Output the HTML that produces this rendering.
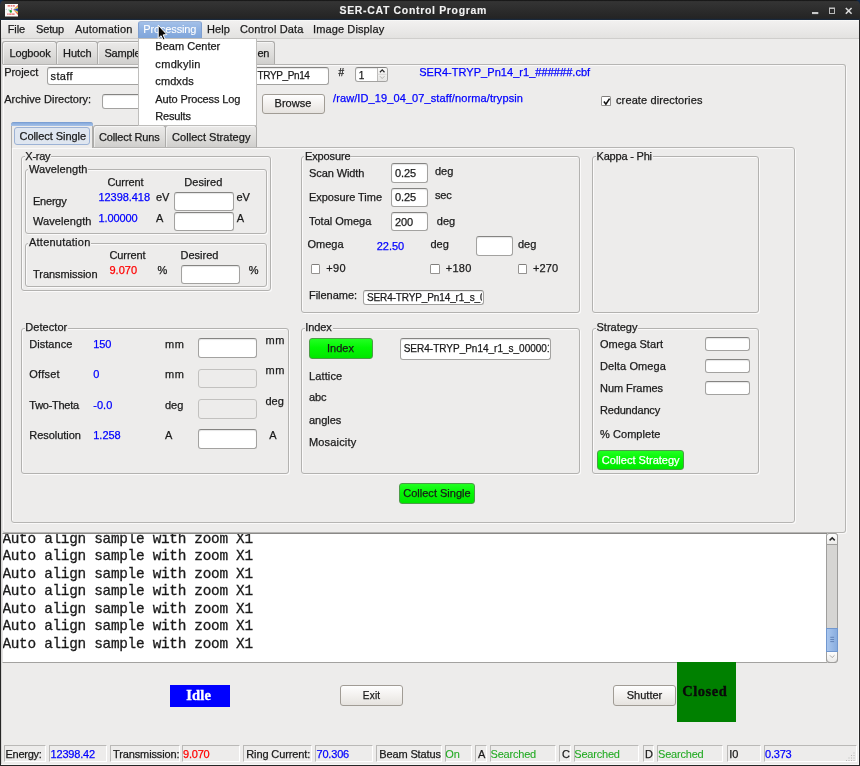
<!DOCTYPE html><html><head><meta charset="utf-8"><title>SER-CAT Control Program</title><style>
html,body{margin:0;padding:0;}
body{width:860px;height:766px;position:relative;overflow:hidden;background:#edeceb;font-family:"Liberation Sans",sans-serif;}
#w{position:absolute;left:0;top:0;width:860px;height:766px;will-change:transform;}
#w>div,#w>svg{position:absolute;}
.t{position:absolute;white-space:nowrap;display:block;-webkit-text-stroke:0.25px;}
</style></head><body><div id="w">
<div style="left:0px;top:0px;width:860px;height:19.7px;background:linear-gradient(#0d0d0d 0,#343434 1.6px,#2d2d2d 9px,#242424 18.3px,#1a2636 19.1px,#1a2a3e 19.7px);"></div>
<svg style="position:absolute;left:0;top:0" width="860" height="6"><path d="M0 0 H4.5 Q0.6 0.6 0 4.5 Z" fill="#10284a"/><path d="M860 0 H855.5 Q859.4 0.6 860 4.5 Z" fill="#10284a"/></svg>
<div style="left:0px;top:19.7px;width:1px;height:746.3px;background:#262626;"></div>
<div style="left:1px;top:19.7px;width:1px;height:745.3px;background:#d6d5d4;"></div>
<div style="left:859px;top:19.7px;width:1px;height:746.3px;background:#262626;"></div>
<div style="left:858px;top:19.7px;width:1px;height:745.3px;background:#f7f7f6;"></div>
<div style="left:1px;top:764px;width:858px;height:1px;background:#f7f7f6;"></div>
<div style="left:0px;top:765px;width:860px;height:1px;background:#262626;"></div>
<svg style="position:absolute;left:5px;top:4.4px" width="13" height="12.5" viewBox="0 0 13 12.5">
<rect width="13" height="12.5" fill="#fbfaf8"/>
<g>
<path d="M8.3 5.8 L13 0.9 L13 2.2 Z" fill="#e8452a"/><path d="M8.3 5.8 L13 2.2 L13 3.0 Z" fill="#f09020"/><path d="M8.3 5.8 L13 3.0 L13 3.7 Z" fill="#e8d820"/><path d="M8.3 5.8 L13 3.7 L13 4.5 Z" fill="#30a838"/>
<path d="M8.3 5.8 L13 4.5 L13 7.3 Z" fill="#2a38b8"/>
<path d="M8.3 5.8 L13 7.3 L13 8.1 Z" fill="#30a838"/><path d="M8.3 5.8 L13 8.1 L13 8.8 Z" fill="#e8d820"/><path d="M8.3 5.8 L13 8.8 L13 9.6 Z" fill="#f09020"/><path d="M8.3 5.8 L13 9.6 L13 10.9 Z" fill="#e8452a"/>
</g>
<path d="M2.6 1.9 H5 M5.6 1.9 H7.3 M7.9 1.9 H9.8" stroke="#e23a3a" stroke-width="1.1" opacity="0.85"/>
<path d="M2.2 10.1 H3.6 M4.2 10.1 H6.6 M7.1 10.1 H9.6" stroke="#e23a3a" stroke-width="1.1" opacity="0.8"/>
<path d="M3.4 5.6 L5.4 6.8" stroke="#86cf92" stroke-width="1.1"/>
<ellipse cx="5.8" cy="7.4" rx="1.15" ry="1.3" fill="#1f9e2e"/>
<circle cx="6.6" cy="4.9" r="0.55" fill="#a8485c"/>
<circle cx="1.2" cy="5.2" r="0.55" fill="#8ea4dc"/>
</svg>
<svg style="position:absolute;left:808px;top:4px" width="50" height="14" viewBox="0 0 50 14">
<rect x="4" y="8" width="6.3" height="2.1" fill="#c9c9c9"/>
<rect x="21.5" y="4.3" width="5" height="5.2" fill="none" stroke="#b9b9b9" stroke-width="1"/><rect x="21" y="3.6" width="6" height="1.3" fill="#c4c4c4"/>
<path d="M37.8 4 L43.6 9.7 M43.6 4 L37.8 9.7" stroke="#dadada" stroke-width="1.6"/>
</svg>
<div style="left:1px;top:19.7px;width:858px;height:19.3px;background:linear-gradient(#fbfbfa 0,#f1f0ef 1.5px,#ebeae9 50%,#e3e2e0);border-bottom:1px solid #cfcecc;box-sizing:border-box;"></div>
<div style="left:2px;top:41px;width:55px;height:24px;background:linear-gradient(#ebeae9,#dddcda 55%,#cecdcb);border:1px solid #acaba9;border-bottom:none;border-radius:3px 3px 0 0;box-sizing:border-box;box-shadow:inset 1px 1px 0 rgba(255,255,255,.55);"></div>
<div style="left:56px;top:41px;width:42px;height:24px;background:linear-gradient(#ebeae9,#dddcda 55%,#cecdcb);border:1px solid #acaba9;border-bottom:none;border-radius:3px 3px 0 0;box-sizing:border-box;box-shadow:inset 1px 1px 0 rgba(255,255,255,.55);"></div>
<div style="left:97px;top:41px;width:103px;height:24px;background:linear-gradient(#ebeae9,#dddcda 55%,#cecdcb);border:1px solid #acaba9;border-bottom:none;border-radius:3px 3px 0 0;box-sizing:border-box;box-shadow:inset 1px 1px 0 rgba(255,255,255,.55);"></div>
<div style="left:199px;top:41px;width:76px;height:24px;background:linear-gradient(#ebeae9,#dddcda 55%,#cecdcb);border:1px solid #acaba9;border-bottom:none;border-radius:3px 3px 0 0;box-sizing:border-box;box-shadow:inset 1px 1px 0 rgba(255,255,255,.55);"></div>
<div style="left:2px;top:64px;width:844px;height:469px;border:1px solid #b6b5b3;border-left-color:#e2e1e0;border-radius:0 3px 3px 3px;box-sizing:border-box;background:#edeceb;box-shadow:inset 1px 1px 0 rgba(255,255,255,.7),1px 1px 0 rgba(255,255,255,.7);"></div>
<div style="left:47px;top:67px;width:103px;height:18.400000000000006px;background:#fff;border:1px solid #a3a2a0;border-top-color:#858482;border-radius:3px;box-sizing:border-box;box-shadow:inset 0 1px 1px rgba(0,0,0,0.10);"></div>
<div style="left:200px;top:67px;width:128.7px;height:18.400000000000006px;background:#fff;border:1px solid #a3a2a0;border-top-color:#858482;border-radius:3px;box-sizing:border-box;box-shadow:inset 0 1px 1px rgba(0,0,0,0.10);"></div>
<div style="left:355px;top:67px;width:32.5px;height:14.799999999999997px;background:#fff;border:1px solid #a3a2a0;border-top-color:#858482;border-radius:3px;box-sizing:border-box;box-shadow:inset 0 1px 1px rgba(0,0,0,0.10);"></div>
<div style="left:376.5px;top:68px;width:10px;height:12.8px;background:linear-gradient(#fafaf9,#e6e5e3);border-left:1px solid #bdbcba;border-radius:0 2px 2px 0;box-sizing:border-box;"></div>
<svg style="position:absolute;left:377px;top:68px" width="10" height="13" viewBox="0 0 10 13"><path d="M2.9 4.2 L5.2 1.9 L7.5 4.2" fill="none" stroke="#2a2a2a" stroke-width="1.3"/><path d="M2.9 8.2 L5.2 10.5 L7.5 8.2" fill="none" stroke="#b5b4b2" stroke-width="1"/><path d="M0.5 6.3H9.5" stroke="#d2d1cf" stroke-width="0.8"/></svg>
<div style="left:102px;top:94px;width:138px;height:14.5px;background:#fff;border:1px solid #a3a2a0;border-top-color:#858482;border-radius:3px;box-sizing:border-box;box-shadow:inset 0 1px 1px rgba(0,0,0,0.10);"></div>
<div style="left:262px;top:94px;width:62.5px;height:19.5px;background:linear-gradient(#fefefe,#f4f2f0 45%,#e6e3df);border:1px solid #a19c95;border-radius:3px;box-sizing:border-box;"></div>
<div style="left:601px;top:96px;width:9.5px;height:9.6px;background:#fff;border:1px solid #959391;border-top-color:#7f7d7b;border-radius:1.5px;box-sizing:border-box;"><svg width="9" height="9" viewBox="0 0 9 9" style="position:absolute;left:0;top:0"><path d="M1.9 4.6 L3.9 7.2 L7.6 1.6" fill="none" stroke="#111" stroke-width="1.6"/></svg></div>
<div style="left:93px;top:125px;width:73px;height:23px;background:linear-gradient(#ebeae9,#dddcda 55%,#cecdcb);border:1px solid #acaba9;border-bottom:none;border-radius:3px 3px 0 0;box-sizing:border-box;box-shadow:inset 1px 1px 0 rgba(255,255,255,.55);"></div>
<div style="left:165px;top:125px;width:92px;height:23px;background:linear-gradient(#ebeae9,#dddcda 55%,#cecdcb);border:1px solid #acaba9;border-bottom:none;border-radius:3px 3px 0 0;box-sizing:border-box;box-shadow:inset 1px 1px 0 rgba(255,255,255,.55);"></div>
<div style="left:11px;top:147px;width:784px;height:376px;border:1px solid #b6b5b3;border-radius:0 3px 3px 3px;box-sizing:border-box;background:#edeceb;box-shadow:inset 1px 1px 0 rgba(255,255,255,.7),1px 1px 0 rgba(255,255,255,.7);"></div>
<div style="left:11px;top:122px;width:82px;height:26px;background:#edeceb;border:1px solid #aeadab;border-bottom:none;border-radius:3px 3px 0 0;box-sizing:border-box;"></div>
<div style="left:11px;top:122px;width:82px;height:4px;background:linear-gradient(#7398cf,#8eb0df 40%,#a6c2e8);border-radius:3px 3px 0 0;box-sizing:border-box;"></div>
<div style="left:14px;top:127px;width:76px;height:18px;background:#dfe6f0;border:1px solid #9cb2d5;border-radius:3px;box-sizing:border-box;"></div>
<div style="left:21px;top:156px;width:250px;height:135px;border:1px solid #b3b2b0;border-radius:3px;box-sizing:border-box;box-shadow:1px 1px 0 rgba(255,255,255,.75), inset 1px 1px 0 rgba(255,255,255,.75);"></div>
<div style="left:24.5px;top:150px;width:26.8px;height:12px;background:#edeceb;"></div>
<div style="left:25px;top:169px;width:242px;height:65px;border:1px solid #b3b2b0;border-radius:3px;box-sizing:border-box;box-shadow:1px 1px 0 rgba(255,255,255,.75), inset 1px 1px 0 rgba(255,255,255,.75);"></div>
<div style="left:28.2px;top:163px;width:60.3px;height:12px;background:#edeceb;"></div>
<div style="left:174px;top:191.5px;width:59.599999999999994px;height:19.099999999999994px;background:#fff;border:1px solid #a3a2a0;border-top-color:#858482;border-radius:3px;box-sizing:border-box;box-shadow:inset 0 1px 1px rgba(0,0,0,0.10);"></div>
<div style="left:174px;top:212px;width:59.599999999999994px;height:19px;background:#fff;border:1px solid #a3a2a0;border-top-color:#858482;border-radius:3px;box-sizing:border-box;box-shadow:inset 0 1px 1px rgba(0,0,0,0.10);"></div>
<div style="left:25px;top:243px;width:242px;height:44px;border:1px solid #b3b2b0;border-radius:3px;box-sizing:border-box;box-shadow:1px 1px 0 rgba(255,255,255,.75), inset 1px 1px 0 rgba(255,255,255,.75);"></div>
<div style="left:28.2px;top:237px;width:63.3px;height:12px;background:#edeceb;"></div>
<div style="left:181px;top:265px;width:59.400000000000006px;height:19px;background:#fff;border:1px solid #a3a2a0;border-top-color:#858482;border-radius:3px;box-sizing:border-box;box-shadow:inset 0 1px 1px rgba(0,0,0,0.10);"></div>
<div style="left:301px;top:156px;width:279px;height:157px;border:1px solid #b3b2b0;border-radius:3px;box-sizing:border-box;box-shadow:1px 1px 0 rgba(255,255,255,.75), inset 1px 1px 0 rgba(255,255,255,.75);"></div>
<div style="left:304.2px;top:150px;width:47.3px;height:12px;background:#edeceb;"></div>
<div style="left:391.4px;top:163px;width:36.60000000000002px;height:19.5px;background:#fff;border:1px solid #a3a2a0;border-top-color:#858482;border-radius:3px;box-sizing:border-box;box-shadow:inset 0 1px 1px rgba(0,0,0,0.10);"></div>
<div style="left:391.4px;top:187.8px;width:36.60000000000002px;height:19.399999999999977px;background:#fff;border:1px solid #a3a2a0;border-top-color:#858482;border-radius:3px;box-sizing:border-box;box-shadow:inset 0 1px 1px rgba(0,0,0,0.10);"></div>
<div style="left:391.4px;top:212px;width:36.60000000000002px;height:19.30000000000001px;background:#fff;border:1px solid #a3a2a0;border-top-color:#858482;border-radius:3px;box-sizing:border-box;box-shadow:inset 0 1px 1px rgba(0,0,0,0.10);"></div>
<div style="left:476.3px;top:236.2px;width:36.49999999999994px;height:19.600000000000023px;background:#fff;border:1px solid #a3a2a0;border-top-color:#858482;border-radius:3px;box-sizing:border-box;box-shadow:inset 0 1px 1px rgba(0,0,0,0.10);"></div>
<div style="left:310.8px;top:264.2px;width:9.5px;height:9.6px;background:#fff;border:1px solid #959391;border-top-color:#7f7d7b;border-radius:1.5px;box-sizing:border-box;"></div>
<div style="left:430px;top:264.2px;width:9.5px;height:9.6px;background:#fff;border:1px solid #959391;border-top-color:#7f7d7b;border-radius:1.5px;box-sizing:border-box;"></div>
<div style="left:517.6px;top:264.2px;width:9.5px;height:9.6px;background:#fff;border:1px solid #959391;border-top-color:#7f7d7b;border-radius:1.5px;box-sizing:border-box;"></div>
<div style="left:363.3px;top:290px;width:120.39999999999998px;height:14.699999999999989px;background:#fff;border:1px solid #a3a2a0;border-top-color:#858482;border-radius:3px;box-sizing:border-box;box-shadow:inset 0 1px 1px rgba(0,0,0,0.10);"></div>
<div style="left:592px;top:156px;width:167px;height:157px;border:1px solid #b3b2b0;border-radius:3px;box-sizing:border-box;box-shadow:1px 1px 0 rgba(255,255,255,.75), inset 1px 1px 0 rgba(255,255,255,.75);"></div>
<div style="left:595.7px;top:150px;width:57.099999999999994px;height:12px;background:#edeceb;"></div>
<div style="left:21px;top:328px;width:268px;height:146px;border:1px solid #b3b2b0;border-radius:3px;box-sizing:border-box;box-shadow:1px 1px 0 rgba(255,255,255,.75), inset 1px 1px 0 rgba(255,255,255,.75);"></div>
<div style="left:24.5px;top:322px;width:43.8px;height:12px;background:#edeceb;"></div>
<div style="left:197.5px;top:338.2px;width:59.60000000000002px;height:19.5px;background:#fff;border:1px solid #a3a2a0;border-top-color:#858482;border-radius:3px;box-sizing:border-box;box-shadow:inset 0 1px 1px rgba(0,0,0,0.10);"></div>
<div style="left:197.5px;top:368.7px;width:59.60000000000002px;height:19.5px;background:#edeceb;border:1px solid #c2c1bf;border-radius:3px;box-sizing:border-box;"></div>
<div style="left:197.5px;top:399.2px;width:59.60000000000002px;height:19.5px;background:#edeceb;border:1px solid #c2c1bf;border-radius:3px;box-sizing:border-box;"></div>
<div style="left:197.5px;top:429.4px;width:59.60000000000002px;height:19.5px;background:#fff;border:1px solid #a3a2a0;border-top-color:#858482;border-radius:3px;box-sizing:border-box;box-shadow:inset 0 1px 1px rgba(0,0,0,0.10);"></div>
<div style="left:301px;top:328px;width:279px;height:146px;border:1px solid #b3b2b0;border-radius:3px;box-sizing:border-box;box-shadow:1px 1px 0 rgba(255,255,255,.75), inset 1px 1px 0 rgba(255,255,255,.75);"></div>
<div style="left:304.5px;top:322px;width:28.3px;height:12px;background:#edeceb;"></div>
<div style="left:309.3px;top:338.3px;width:63.39999999999998px;height:20.5px;background:linear-gradient(#22ff22,#04f804 45%,#00e600);border:1px solid #4d9c48;border-radius:3px;box-sizing:border-box;"></div>
<div style="left:400px;top:338.3px;width:150.70000000000005px;height:21.69999999999999px;background:#fff;border:1px solid #a3a2a0;border-top-color:#858482;border-radius:3px;box-sizing:border-box;box-shadow:inset 0 1px 1px rgba(0,0,0,0.10);"></div>
<div style="left:592px;top:328px;width:167px;height:146px;border:1px solid #b3b2b0;border-radius:3px;box-sizing:border-box;box-shadow:1px 1px 0 rgba(255,255,255,.75), inset 1px 1px 0 rgba(255,255,255,.75);"></div>
<div style="left:595.7px;top:322px;width:42.8px;height:12px;background:#edeceb;"></div>
<div style="left:705.3px;top:337px;width:44.5px;height:13.800000000000011px;background:#fff;border:1px solid #a3a2a0;border-top-color:#858482;border-radius:3px;box-sizing:border-box;box-shadow:inset 0 1px 1px rgba(0,0,0,0.10);"></div>
<div style="left:705.3px;top:359px;width:44.5px;height:13.800000000000011px;background:#fff;border:1px solid #a3a2a0;border-top-color:#858482;border-radius:3px;box-sizing:border-box;box-shadow:inset 0 1px 1px rgba(0,0,0,0.10);"></div>
<div style="left:705.3px;top:381px;width:44.5px;height:13.800000000000011px;background:#fff;border:1px solid #a3a2a0;border-top-color:#858482;border-radius:3px;box-sizing:border-box;box-shadow:inset 0 1px 1px rgba(0,0,0,0.10);"></div>
<div style="left:597px;top:449.5px;width:86.70000000000005px;height:20.5px;background:linear-gradient(#22ff22,#04f804 45%,#00e600);border:1px solid #4d9c48;border-radius:3px;box-sizing:border-box;"></div>
<div style="left:399.3px;top:483px;width:75.39999999999998px;height:20.5px;background:linear-gradient(#22ff22,#04f804 45%,#00e600);border:1px solid #4d9c48;border-radius:3px;box-sizing:border-box;"></div>
<div style="left:2px;top:533px;width:825px;height:129.5px;background:#fff;border:1px solid #a3a2a0;border-top-color:#8a8987;border-right:none;border-left-color:#e4e3e2;box-sizing:border-box;overflow:hidden;"><div style="position:absolute;left:-0.6px;top:-3.3px;font-family:'Liberation Mono',monospace;font-size:14.4px;letter-spacing:-0.29px;line-height:17.5px;color:#1a1a1a;white-space:pre;-webkit-text-stroke:0.3px;">Auto align sample with zoom X1
Auto align sample with zoom X1
Auto align sample with zoom X1
Auto align sample with zoom X1
Auto align sample with zoom X1
Auto align sample with zoom X1
Auto align sample with zoom X1</div></div>
<div style="left:826px;top:533px;width:12px;height:129.5px;background:#d6d5d3;border:1px solid #9f9e9c;border-radius:3px;box-sizing:border-box;"></div>
<div style="left:826px;top:533px;width:12px;height:12px;background:linear-gradient(#ffffff,#ecebe9);border:1px solid #9f9e9c;border-radius:3px 3px 0 0;box-sizing:border-box;"></div>
<div style="left:826px;top:651px;width:12px;height:11.5px;background:linear-gradient(#fdfdfd,#ecebe9);border:1px solid #9f9e9c;border-radius:0 0 4px 4px;box-sizing:border-box;"></div>
<div style="left:826px;top:628px;width:12px;height:23.5px;background:linear-gradient(90deg,#a9c6ee,#89addf);border:1px solid #7197cf;box-sizing:border-box;"></div>
<svg style="position:absolute;left:826px;top:533px" width="12" height="130" viewBox="0 0 12 130"><path d="M3.6 7.4 L6.2 4.9 L8.8 7.4" fill="none" stroke="#2a2a2a" stroke-width="1.5"/><path d="M3.9 122.3 L6.2 124.6 L8.5 122.3" fill="none" stroke="#a9a8a6" stroke-width="1"/><path d="M4.3 104.3H8.1M4.3 106.5H8.1M4.3 108.6H8.1" stroke="#5c7eb2" stroke-width="0.9"/></svg>
<div style="left:170px;top:685px;width:60px;height:21.7px;background:#0000ff;"></div>
<div style="left:340px;top:685px;width:63px;height:20.799999999999955px;background:linear-gradient(#fefefe,#f4f2f0 45%,#e6e3df);border:1px solid #a19c95;border-radius:3px;box-sizing:border-box;"></div>
<div style="left:613.3px;top:685px;width:62.700000000000045px;height:20.799999999999955px;background:linear-gradient(#fefefe,#f4f2f0 45%,#e6e3df);border:1px solid #a19c95;border-radius:3px;box-sizing:border-box;"></div>
<div style="left:677px;top:662px;width:59px;height:59.6px;background:#008000;"></div>
<div style="left:3.5px;top:745px;width:42.7px;height:16.8px;border:1px solid;border-color:#bab9b7 #ffffff #ffffff #bab9b7;box-sizing:border-box;"></div>
<div style="left:49.3px;top:745px;width:57.7px;height:16.8px;border:1px solid;border-color:#bab9b7 #ffffff #ffffff #bab9b7;box-sizing:border-box;"></div>
<div style="left:110px;top:745px;width:69.69999999999999px;height:16.8px;border:1px solid;border-color:#bab9b7 #ffffff #ffffff #bab9b7;box-sizing:border-box;"></div>
<div style="left:182px;top:745px;width:58px;height:16.8px;border:1px solid;border-color:#bab9b7 #ffffff #ffffff #bab9b7;box-sizing:border-box;"></div>
<div style="left:243.3px;top:745px;width:68.5px;height:16.8px;border:1px solid;border-color:#bab9b7 #ffffff #ffffff #bab9b7;box-sizing:border-box;"></div>
<div style="left:315px;top:745px;width:57.5px;height:16.8px;border:1px solid;border-color:#bab9b7 #ffffff #ffffff #bab9b7;box-sizing:border-box;"></div>
<div style="left:376.3px;top:745px;width:65.5px;height:16.8px;border:1px solid;border-color:#bab9b7 #ffffff #ffffff #bab9b7;box-sizing:border-box;"></div>
<div style="left:444.5px;top:745px;width:27.5px;height:16.8px;border:1px solid;border-color:#bab9b7 #ffffff #ffffff #bab9b7;box-sizing:border-box;"></div>
<div style="left:475px;top:745px;width:12px;height:16.8px;border:1px solid;border-color:#bab9b7 #ffffff #ffffff #bab9b7;box-sizing:border-box;"></div>
<div style="left:490px;top:745px;width:65.5px;height:16.8px;border:1px solid;border-color:#bab9b7 #ffffff #ffffff #bab9b7;box-sizing:border-box;"></div>
<div style="left:559.3px;top:745px;width:11.700000000000045px;height:16.8px;border:1px solid;border-color:#bab9b7 #ffffff #ffffff #bab9b7;box-sizing:border-box;"></div>
<div style="left:573.8px;top:745px;width:65.5px;height:16.8px;border:1px solid;border-color:#bab9b7 #ffffff #ffffff #bab9b7;box-sizing:border-box;"></div>
<div style="left:643.2px;top:745px;width:10.599999999999909px;height:16.8px;border:1px solid;border-color:#bab9b7 #ffffff #ffffff #bab9b7;box-sizing:border-box;"></div>
<div style="left:657.4px;top:745px;width:65.89999999999998px;height:16.8px;border:1px solid;border-color:#bab9b7 #ffffff #ffffff #bab9b7;box-sizing:border-box;"></div>
<div style="left:727px;top:745px;width:34px;height:16.8px;border:1px solid;border-color:#bab9b7 #ffffff #ffffff #bab9b7;box-sizing:border-box;"></div>
<div style="left:764px;top:745px;width:92.5px;height:16.8px;border:1px solid;border-color:#bab9b7 #ffffff #ffffff #bab9b7;box-sizing:border-box;"></div>
<svg style="position:absolute;left:846px;top:752px" width="10" height="9"><g fill="#b9b8b6"><rect x="7.5" y="0.5" width="1" height="1"/><rect x="5" y="3" width="1" height="1"/><rect x="7.5" y="3" width="1" height="1"/><rect x="2.5" y="5.5" width="1" height="1"/><rect x="5" y="5.5" width="1" height="1"/><rect x="7.5" y="5.5" width="1" height="1"/><rect x="0" y="8" width="1" height="1"/><rect x="2.5" y="8" width="1" height="1"/><rect x="5" y="8" width="1" height="1"/><rect x="7.5" y="8" width="1" height="1"/></g></svg>
<span class="t" style="left:339.5px;top:3.00px;font-size:10.5px;line-height:14px;color:#f2f2f2;font-family:'Liberation Sans', sans-serif;font-weight:bold;-webkit-text-stroke:0.1px;letter-spacing:0.664px;">SER-CAT Control Program</span>
<span class="t" style="left:7.7px;top:22.00px;font-size:11px;line-height:14px;color:#1a1a1a;font-family:'Liberation Sans', sans-serif;letter-spacing:-0.059px;">File</span>
<span class="t" style="left:36px;top:22.00px;font-size:11px;line-height:14px;color:#1a1a1a;font-family:'Liberation Sans', sans-serif;letter-spacing:-0.150px;">Setup</span>
<span class="t" style="left:75px;top:22.00px;font-size:11px;line-height:14px;color:#1a1a1a;font-family:'Liberation Sans', sans-serif;letter-spacing:0.184px;">Automation</span>
<span class="t" style="left:207px;top:22.00px;font-size:11px;line-height:14px;color:#1a1a1a;font-family:'Liberation Sans', sans-serif;letter-spacing:0.094px;">Help</span>
<span class="t" style="left:240px;top:22.00px;font-size:11px;line-height:14px;color:#1a1a1a;font-family:'Liberation Sans', sans-serif;letter-spacing:0.145px;">Control Data</span>
<span class="t" style="left:313px;top:22.00px;font-size:11px;line-height:14px;color:#1a1a1a;font-family:'Liberation Sans', sans-serif;letter-spacing:0.123px;">Image Display</span>
<span class="t" style="left:9.5px;top:46.00px;font-size:11px;line-height:14px;color:#1a1a1a;font-family:'Liberation Sans', sans-serif;letter-spacing:-0.174px;">Logbook</span>
<span class="t" style="left:63px;top:46.00px;font-size:11px;line-height:14px;color:#1a1a1a;font-family:'Liberation Sans', sans-serif;letter-spacing:-0.050px;">Hutch</span>
<span class="t" style="left:104.5px;top:46.00px;font-size:11px;line-height:14px;color:#1a1a1a;font-family:'Liberation Sans', sans-serif;letter-spacing:-0.216px;">Sample</span>
<span class="t" style="left:257.5px;top:46.00px;font-size:11px;line-height:14px;color:#1a1a1a;font-family:'Liberation Sans', sans-serif;letter-spacing:-0.375px;">en</span>
<span class="t" style="left:4.2px;top:65.00px;font-size:11px;line-height:14px;color:#1a1a1a;font-family:'Liberation Sans', sans-serif;letter-spacing:-0.036px;">Project</span>
<span class="t" style="left:50.5px;top:69.00px;font-size:11px;line-height:14px;color:#1a1a1a;font-family:'Liberation Sans', sans-serif;letter-spacing:0.381px;">staff</span>
<span class="t" style="left:257.5px;top:69.00px;font-size:10px;line-height:14px;color:#1a1a1a;font-family:'Liberation Sans', sans-serif;letter-spacing:-0.378px;">TRYP_Pn14</span>
<span class="t" style="left:338.6px;top:66.00px;font-size:10px;line-height:14px;color:#1a1a1a;font-family:'Liberation Sans', sans-serif;letter-spacing:0.900px;">#</span>
<span class="t" style="left:358.8px;top:69.00px;font-size:10px;line-height:14px;color:#1a1a1a;font-family:'Liberation Sans', sans-serif;letter-spacing:0.000px;">1</span>
<span class="t" style="left:419.2px;top:65.00px;font-size:11px;line-height:14px;color:#0000ff;font-family:'Liberation Sans', sans-serif;letter-spacing:0.043px;">SER4-TRYP_Pn14_r1_######.cbf</span>
<span class="t" style="left:4.2px;top:92.00px;font-size:11px;line-height:14px;color:#1a1a1a;font-family:'Liberation Sans', sans-serif;letter-spacing:0.011px;">Archive Directory:</span>
<span class="t" style="left:274.5px;top:96.00px;font-size:11px;line-height:14px;color:#1a1a1a;font-family:'Liberation Sans', sans-serif;letter-spacing:0.052px;">Browse</span>
<span class="t" style="left:333px;top:91.00px;font-size:11px;line-height:14px;color:#0000ff;font-family:'Liberation Sans', sans-serif;letter-spacing:0.103px;">/raw/ID_19_04_07_staff/norma/trypsin</span>
<span class="t" style="left:616px;top:93.00px;font-size:11px;line-height:14px;color:#1a1a1a;font-family:'Liberation Sans', sans-serif;letter-spacing:0.118px;">create directories</span>
<span class="t" style="left:19.5px;top:129.00px;font-size:11px;line-height:14px;color:#1a1a1a;font-family:'Liberation Sans', sans-serif;letter-spacing:-0.055px;">Collect Single</span>
<span class="t" style="left:99px;top:130.00px;font-size:11px;line-height:14px;color:#1a1a1a;font-family:'Liberation Sans', sans-serif;letter-spacing:-0.155px;">Collect Runs</span>
<span class="t" style="left:172px;top:130.00px;font-size:11px;line-height:14px;color:#1a1a1a;font-family:'Liberation Sans', sans-serif;letter-spacing:0.053px;">Collect Strategy</span>
<span class="t" style="left:25.3px;top:149.00px;font-size:11px;line-height:14px;color:#1a1a1a;font-family:'Liberation Sans', sans-serif;letter-spacing:-0.256px;">X-ray</span>
<span class="t" style="left:29px;top:162.00px;font-size:11px;line-height:14px;color:#1a1a1a;font-family:'Liberation Sans', sans-serif;letter-spacing:0.081px;">Wavelength</span>
<span class="t" style="left:107.5px;top:175.00px;font-size:11px;line-height:14px;color:#1a1a1a;font-family:'Liberation Sans', sans-serif;letter-spacing:-0.098px;">Current</span>
<span class="t" style="left:184.3px;top:175.00px;font-size:11px;line-height:14px;color:#1a1a1a;font-family:'Liberation Sans', sans-serif;letter-spacing:0.013px;">Desired</span>
<span class="t" style="left:33px;top:194.00px;font-size:11px;line-height:14px;color:#1a1a1a;font-family:'Liberation Sans', sans-serif;letter-spacing:-0.227px;">Energy</span>
<span class="t" style="left:98.5px;top:190.00px;font-size:11px;line-height:14px;color:#0000ff;font-family:'Liberation Sans', sans-serif;letter-spacing:-0.056px;">12398.418</span>
<span class="t" style="left:156px;top:190.00px;font-size:11px;line-height:14px;color:#1a1a1a;font-family:'Liberation Sans', sans-serif;letter-spacing:-0.234px;">eV</span>
<span class="t" style="left:236.5px;top:190.00px;font-size:11px;line-height:14px;color:#1a1a1a;font-family:'Liberation Sans', sans-serif;letter-spacing:-0.234px;">eV</span>
<span class="t" style="left:33px;top:214.00px;font-size:11px;line-height:14px;color:#1a1a1a;font-family:'Liberation Sans', sans-serif;letter-spacing:0.081px;">Wavelength</span>
<span class="t" style="left:98.5px;top:211.00px;font-size:11px;line-height:14px;color:#0000ff;font-family:'Liberation Sans', sans-serif;letter-spacing:-0.109px;">1.00000</span>
<span class="t" style="left:156px;top:211.00px;font-size:11px;line-height:14px;color:#1a1a1a;font-family:'Liberation Sans', sans-serif;letter-spacing:-0.344px;">A</span>
<span class="t" style="left:236.8px;top:211.00px;font-size:11px;line-height:14px;color:#1a1a1a;font-family:'Liberation Sans', sans-serif;letter-spacing:-0.344px;">A</span>
<span class="t" style="left:29px;top:235.00px;font-size:11px;line-height:14px;color:#1a1a1a;font-family:'Liberation Sans', sans-serif;letter-spacing:0.232px;">Attenutation</span>
<span class="t" style="left:109.5px;top:248.00px;font-size:11px;line-height:14px;color:#1a1a1a;font-family:'Liberation Sans', sans-serif;letter-spacing:-0.098px;">Current</span>
<span class="t" style="left:180.5px;top:248.00px;font-size:11px;line-height:14px;color:#1a1a1a;font-family:'Liberation Sans', sans-serif;letter-spacing:0.013px;">Desired</span>
<span class="t" style="left:33px;top:267.00px;font-size:11px;line-height:14px;color:#1a1a1a;font-family:'Liberation Sans', sans-serif;letter-spacing:-0.042px;">Transmission</span>
<span class="t" style="left:109.5px;top:263.00px;font-size:11px;line-height:14px;color:#ff0000;font-family:'Liberation Sans', sans-serif;letter-spacing:-0.006px;">9.070</span>
<span class="t" style="left:157.5px;top:263.00px;font-size:11px;line-height:14px;color:#1a1a1a;font-family:'Liberation Sans', sans-serif;letter-spacing:-0.281px;">%</span>
<span class="t" style="left:248.8px;top:263.00px;font-size:11px;line-height:14px;color:#1a1a1a;font-family:'Liberation Sans', sans-serif;letter-spacing:-0.281px;">%</span>
<span class="t" style="left:305px;top:149.00px;font-size:11px;line-height:14px;color:#1a1a1a;font-family:'Liberation Sans', sans-serif;letter-spacing:-0.123px;">Exposure</span>
<span class="t" style="left:309px;top:166.00px;font-size:11px;line-height:14px;color:#1a1a1a;font-family:'Liberation Sans', sans-serif;letter-spacing:-0.095px;">Scan Width</span>
<span class="t" style="left:395px;top:166.00px;font-size:11px;line-height:14px;color:#1a1a1a;font-family:'Liberation Sans', sans-serif;letter-spacing:-0.105px;">0.25</span>
<span class="t" style="left:435px;top:164.00px;font-size:11px;line-height:14px;color:#1a1a1a;font-family:'Liberation Sans', sans-serif;letter-spacing:-0.020px;">deg</span>
<span class="t" style="left:309px;top:190.00px;font-size:11px;line-height:14px;color:#1a1a1a;font-family:'Liberation Sans', sans-serif;letter-spacing:-0.029px;">Exposure Time</span>
<span class="t" style="left:395px;top:190.00px;font-size:11px;line-height:14px;color:#1a1a1a;font-family:'Liberation Sans', sans-serif;letter-spacing:-0.105px;">0.25</span>
<span class="t" style="left:435px;top:188.00px;font-size:11px;line-height:14px;color:#1a1a1a;font-family:'Liberation Sans', sans-serif;letter-spacing:-0.208px;">sec</span>
<span class="t" style="left:309px;top:214.00px;font-size:11px;line-height:14px;color:#1a1a1a;font-family:'Liberation Sans', sans-serif;letter-spacing:-0.007px;">Total Omega</span>
<span class="t" style="left:395px;top:215.00px;font-size:11px;line-height:14px;color:#1a1a1a;font-family:'Liberation Sans', sans-serif;letter-spacing:-0.120px;">200</span>
<span class="t" style="left:436.8px;top:214.00px;font-size:11px;line-height:14px;color:#1a1a1a;font-family:'Liberation Sans', sans-serif;letter-spacing:-0.020px;">deg</span>
<span class="t" style="left:307.5px;top:237.00px;font-size:11px;line-height:14px;color:#1a1a1a;font-family:'Liberation Sans', sans-serif;letter-spacing:-0.016px;">Omega</span>
<span class="t" style="left:376.8px;top:239.00px;font-size:11px;line-height:14px;color:#0000ff;font-family:'Liberation Sans', sans-serif;letter-spacing:-0.046px;">22.50</span>
<span class="t" style="left:430.5px;top:237.00px;font-size:11px;line-height:14px;color:#1a1a1a;font-family:'Liberation Sans', sans-serif;letter-spacing:-0.020px;">deg</span>
<span class="t" style="left:518px;top:237.00px;font-size:11px;line-height:14px;color:#1a1a1a;font-family:'Liberation Sans', sans-serif;letter-spacing:-0.020px;">deg</span>
<span class="t" style="left:326.2px;top:261.00px;font-size:11px;line-height:14px;color:#1a1a1a;font-family:'Liberation Sans', sans-serif;letter-spacing:0.443px;">+90</span>
<span class="t" style="left:445.8px;top:261.00px;font-size:11px;line-height:14px;color:#1a1a1a;font-family:'Liberation Sans', sans-serif;letter-spacing:0.255px;">+180</span>
<span class="t" style="left:533px;top:261.00px;font-size:11px;line-height:14px;color:#1a1a1a;font-family:'Liberation Sans', sans-serif;letter-spacing:0.130px;">+270</span>
<span class="t" style="left:309px;top:288.00px;font-size:11px;line-height:14px;color:#1a1a1a;font-family:'Liberation Sans', sans-serif;letter-spacing:-0.033px;">Filename:</span>
<span class="t" style="left:367px;top:291.00px;font-size:10px;line-height:14px;color:#1a1a1a;font-family:'Liberation Sans', sans-serif;letter-spacing:-0.120px;width:115.30000000000001px;overflow:hidden;">SER4-TRYP_Pn14_r1_s_000001</span>
<span class="t" style="left:596.5px;top:149.00px;font-size:11px;line-height:14px;color:#1a1a1a;font-family:'Liberation Sans', sans-serif;letter-spacing:-0.199px;">Kappa - Phi</span>
<span class="t" style="left:25.3px;top:320.00px;font-size:11px;line-height:14px;color:#1a1a1a;font-family:'Liberation Sans', sans-serif;letter-spacing:0.053px;">Detector</span>
<span class="t" style="left:29.3px;top:337.00px;font-size:11px;line-height:14px;color:#1a1a1a;font-family:'Liberation Sans', sans-serif;letter-spacing:0.025px;">Distance</span>
<span class="t" style="left:93.3px;top:337.00px;font-size:11px;line-height:14px;color:#0000ff;font-family:'Liberation Sans', sans-serif;letter-spacing:-0.120px;">150</span>
<span class="t" style="left:165px;top:337.00px;font-size:11px;line-height:14px;color:#1a1a1a;font-family:'Liberation Sans', sans-serif;letter-spacing:0.586px;">mm</span>
<span class="t" style="left:265.5px;top:333.00px;font-size:11px;line-height:14px;color:#1a1a1a;font-family:'Liberation Sans', sans-serif;letter-spacing:0.586px;">mm</span>
<span class="t" style="left:29.3px;top:367.00px;font-size:11px;line-height:14px;color:#1a1a1a;font-family:'Liberation Sans', sans-serif;letter-spacing:0.224px;">Offset</span>
<span class="t" style="left:93.3px;top:367.00px;font-size:11px;line-height:14px;color:#0000ff;font-family:'Liberation Sans', sans-serif;letter-spacing:-0.125px;">0</span>
<span class="t" style="left:165px;top:367.00px;font-size:11px;line-height:14px;color:#1a1a1a;font-family:'Liberation Sans', sans-serif;letter-spacing:0.586px;">mm</span>
<span class="t" style="left:265.5px;top:363.00px;font-size:11px;line-height:14px;color:#1a1a1a;font-family:'Liberation Sans', sans-serif;letter-spacing:0.586px;">mm</span>
<span class="t" style="left:29.3px;top:398.00px;font-size:11px;line-height:14px;color:#1a1a1a;font-family:'Liberation Sans', sans-serif;letter-spacing:-0.274px;">Two-Theta</span>
<span class="t" style="left:93.3px;top:398.00px;font-size:11px;line-height:14px;color:#0000ff;font-family:'Liberation Sans', sans-serif;letter-spacing:0.008px;">-0.0</span>
<span class="t" style="left:165px;top:398.00px;font-size:11px;line-height:14px;color:#1a1a1a;font-family:'Liberation Sans', sans-serif;letter-spacing:-0.020px;">deg</span>
<span class="t" style="left:265.5px;top:394.00px;font-size:11px;line-height:14px;color:#1a1a1a;font-family:'Liberation Sans', sans-serif;letter-spacing:-0.020px;">deg</span>
<span class="t" style="left:29.3px;top:428.00px;font-size:11px;line-height:14px;color:#1a1a1a;font-family:'Liberation Sans', sans-serif;letter-spacing:-0.048px;">Resolution</span>
<span class="t" style="left:93.3px;top:428.00px;font-size:11px;line-height:14px;color:#0000ff;font-family:'Liberation Sans', sans-serif;letter-spacing:-0.046px;">1.258</span>
<span class="t" style="left:165px;top:428.00px;font-size:11px;line-height:14px;color:#1a1a1a;font-family:'Liberation Sans', sans-serif;letter-spacing:-0.344px;">A</span>
<span class="t" style="left:269.3px;top:428.00px;font-size:11px;line-height:14px;color:#1a1a1a;font-family:'Liberation Sans', sans-serif;letter-spacing:-0.344px;">A</span>
<span class="t" style="left:305.3px;top:320.00px;font-size:11px;line-height:14px;color:#1a1a1a;font-family:'Liberation Sans', sans-serif;letter-spacing:-0.084px;">Index</span>
<span class="t" style="left:327px;top:341.00px;font-size:11px;line-height:14px;color:#1a1a1a;font-family:'Liberation Sans', sans-serif;letter-spacing:0.016px;">Index</span>
<span class="t" style="left:403.7px;top:342.00px;font-size:10px;line-height:14px;color:#1a1a1a;font-family:'Liberation Sans', sans-serif;letter-spacing:0.000px;width:145.00000000000006px;overflow:hidden;">SER4-TRYP_Pn14_r1_s_000001.</span>
<span class="t" style="left:309px;top:369.00px;font-size:11px;line-height:14px;color:#1a1a1a;font-family:'Liberation Sans', sans-serif;letter-spacing:0.125px;">Lattice</span>
<span class="t" style="left:309px;top:390.00px;font-size:11px;line-height:14px;color:#1a1a1a;font-family:'Liberation Sans', sans-serif;letter-spacing:-0.150px;">abc</span>
<span class="t" style="left:309px;top:413.00px;font-size:11px;line-height:14px;color:#1a1a1a;font-family:'Liberation Sans', sans-serif;letter-spacing:-0.020px;">angles</span>
<span class="t" style="left:309px;top:435.00px;font-size:11px;line-height:14px;color:#1a1a1a;font-family:'Liberation Sans', sans-serif;letter-spacing:0.162px;">Mosaicity</span>
<span class="t" style="left:596.5px;top:320.00px;font-size:11px;line-height:14px;color:#1a1a1a;font-family:'Liberation Sans', sans-serif;letter-spacing:0.004px;">Strategy</span>
<span class="t" style="left:600px;top:337.00px;font-size:11px;line-height:14px;color:#1a1a1a;font-family:'Liberation Sans', sans-serif;letter-spacing:0.058px;">Omega Start</span>
<span class="t" style="left:600px;top:359.00px;font-size:11px;line-height:14px;color:#1a1a1a;font-family:'Liberation Sans', sans-serif;letter-spacing:0.108px;">Delta Omega</span>
<span class="t" style="left:600px;top:381.00px;font-size:11px;line-height:14px;color:#1a1a1a;font-family:'Liberation Sans', sans-serif;letter-spacing:-0.056px;">Num Frames</span>
<span class="t" style="left:600px;top:403.00px;font-size:11px;line-height:14px;color:#1a1a1a;font-family:'Liberation Sans', sans-serif;letter-spacing:-0.178px;">Redundancy</span>
<span class="t" style="left:600px;top:427.00px;font-size:11px;line-height:14px;color:#1a1a1a;font-family:'Liberation Sans', sans-serif;letter-spacing:0.058px;">% Complete</span>
<span class="t" style="left:601.8px;top:453.00px;font-size:11px;line-height:14px;color:#ffffff;font-family:'Liberation Sans', sans-serif;letter-spacing:0.009px;">Collect Strategy</span>
<span class="t" style="left:403.3px;top:486.00px;font-size:11px;line-height:14px;color:#1a1a1a;font-family:'Liberation Sans', sans-serif;letter-spacing:0.002px;">Collect Single</span>
<span class="t" style="left:186.2px;top:688.00px;font-size:14.5px;line-height:14px;color:#ffffff;font-family:'Liberation Serif', serif;font-weight:bold;-webkit-text-stroke:0.35px;letter-spacing:0.207px;">Idle</span>
<span class="t" style="left:362.8px;top:689.00px;font-size:10px;line-height:14px;color:#1a1a1a;font-family:'Liberation Sans', sans-serif;letter-spacing:0.207px;">Exit</span>
<span class="t" style="left:626.7px;top:688.00px;font-size:11px;line-height:14px;color:#1a1a1a;font-family:'Liberation Sans', sans-serif;letter-spacing:0.019px;">Shutter</span>
<span class="t" style="left:682.3px;top:684.00px;font-size:14.5px;line-height:14px;color:#0a0a0a;font-family:'Liberation Serif', serif;font-weight:bold;-webkit-text-stroke:0.35px;letter-spacing:0.516px;">Closed</span>
<span class="t" style="left:5.5px;top:747.00px;font-size:11px;line-height:14px;color:#1a1a1a;font-family:'Liberation Sans', sans-serif;letter-spacing:-0.275px;">Energy:</span>
<span class="t" style="left:50.5px;top:747.00px;font-size:11px;line-height:14px;color:#0000ff;font-family:'Liberation Sans', sans-serif;letter-spacing:-0.174px;">12398.42</span>
<span class="t" style="left:113px;top:747.00px;font-size:11px;line-height:14px;color:#1a1a1a;font-family:'Liberation Sans', sans-serif;letter-spacing:-0.120px;">Transmission:</span>
<span class="t" style="left:183px;top:747.00px;font-size:11px;line-height:14px;color:#ff0000;font-family:'Liberation Sans', sans-serif;letter-spacing:-0.206px;">9.070</span>
<span class="t" style="left:246.3px;top:747.00px;font-size:11px;line-height:14px;color:#1a1a1a;font-family:'Liberation Sans', sans-serif;letter-spacing:-0.125px;">Ring Current:</span>
<span class="t" style="left:316.5px;top:747.00px;font-size:11px;line-height:14px;color:#0000ff;font-family:'Liberation Sans', sans-serif;letter-spacing:-0.193px;">70.306</span>
<span class="t" style="left:379.3px;top:747.00px;font-size:11px;line-height:14px;color:#1a1a1a;font-family:'Liberation Sans', sans-serif;letter-spacing:-0.135px;">Beam Status</span>
<span class="t" style="left:445.3px;top:747.00px;font-size:11px;line-height:14px;color:#22aa22;font-family:'Liberation Sans', sans-serif;-webkit-text-stroke:0.08px;letter-spacing:-0.194px;">On</span>
<span class="t" style="left:478px;top:747.00px;font-size:11px;line-height:14px;color:#1a1a1a;font-family:'Liberation Sans', sans-serif;letter-spacing:-0.344px;">A</span>
<span class="t" style="left:490.5px;top:747.00px;font-size:11px;line-height:14px;color:#22aa22;font-family:'Liberation Sans', sans-serif;-webkit-text-stroke:0.08px;letter-spacing:-0.199px;">Searched</span>
<span class="t" style="left:562px;top:747.00px;font-size:11px;line-height:14px;color:#1a1a1a;font-family:'Liberation Sans', sans-serif;letter-spacing:-0.600px;">C</span>
<span class="t" style="left:574.3px;top:747.00px;font-size:11px;line-height:14px;color:#22aa22;font-family:'Liberation Sans', sans-serif;-webkit-text-stroke:0.08px;letter-spacing:-0.199px;">Searched</span>
<span class="t" style="left:645px;top:747.00px;font-size:11px;line-height:14px;color:#1a1a1a;font-family:'Liberation Sans', sans-serif;letter-spacing:-0.453px;">D</span>
<span class="t" style="left:658px;top:747.00px;font-size:11px;line-height:14px;color:#22aa22;font-family:'Liberation Sans', sans-serif;-webkit-text-stroke:0.08px;letter-spacing:-0.199px;">Searched</span>
<span class="t" style="left:729.3px;top:747.00px;font-size:11px;line-height:14px;color:#1a1a1a;font-family:'Liberation Sans', sans-serif;letter-spacing:-0.094px;">I0</span>
<span class="t" style="left:765px;top:747.00px;font-size:11px;line-height:14px;color:#0000ff;font-family:'Liberation Sans', sans-serif;letter-spacing:-0.206px;">0.373</span>
<div style="left:138px;top:20.8px;width:63.8px;height:17.4px;background:linear-gradient(#a3c0e8,#8db0e1 50%,#7fa5da);border:1px solid #7f9fd0;border-top-color:#9db3d6;border-bottom:none;border-radius:3px 3px 0 0;box-sizing:border-box;"></div>
<div style="left:138px;top:37.5px;width:118.7px;height:88px;background:#ffffff;border:1px solid #bfbebc;box-sizing:border-box;"></div>
<span class="t" style="left:143.3px;top:22.00px;font-size:11px;line-height:14px;color:#ffffff;font-family:'Liberation Sans', sans-serif;-webkit-text-stroke:0.08px;letter-spacing:-0.142px;">Processing</span>
<span class="t" style="left:155.3px;top:39.00px;font-size:11px;line-height:14px;color:#1a1a1a;font-family:'Liberation Sans', sans-serif;letter-spacing:0.017px;">Beam Center</span>
<span class="t" style="left:155.3px;top:57.00px;font-size:11px;line-height:14px;color:#1a1a1a;font-family:'Liberation Sans', sans-serif;letter-spacing:0.338px;">cmdkylin</span>
<span class="t" style="left:155.3px;top:74.00px;font-size:11px;line-height:14px;color:#1a1a1a;font-family:'Liberation Sans', sans-serif;letter-spacing:0.099px;">cmdxds</span>
<span class="t" style="left:155.3px;top:92.00px;font-size:11px;line-height:14px;color:#1a1a1a;font-family:'Liberation Sans', sans-serif;letter-spacing:-0.115px;">Auto Process Log</span>
<span class="t" style="left:155.3px;top:109.00px;font-size:11px;line-height:14px;color:#1a1a1a;font-family:'Liberation Sans', sans-serif;letter-spacing:-0.170px;">Results</span>
<svg style="position:absolute;left:157.2px;top:24.2px" width="12" height="18" viewBox="-1.2 -1.2 12 18"><path d="M0 0 L0 13.2 L2.9 10.5 L4.9 14.7 L6.9 13.8 L4.9 9.7 L8.7 9.4 Z" fill="#0a0a0a" stroke="#ffffff" stroke-width="1" stroke-linejoin="round"/></svg>
</div></body></html>
